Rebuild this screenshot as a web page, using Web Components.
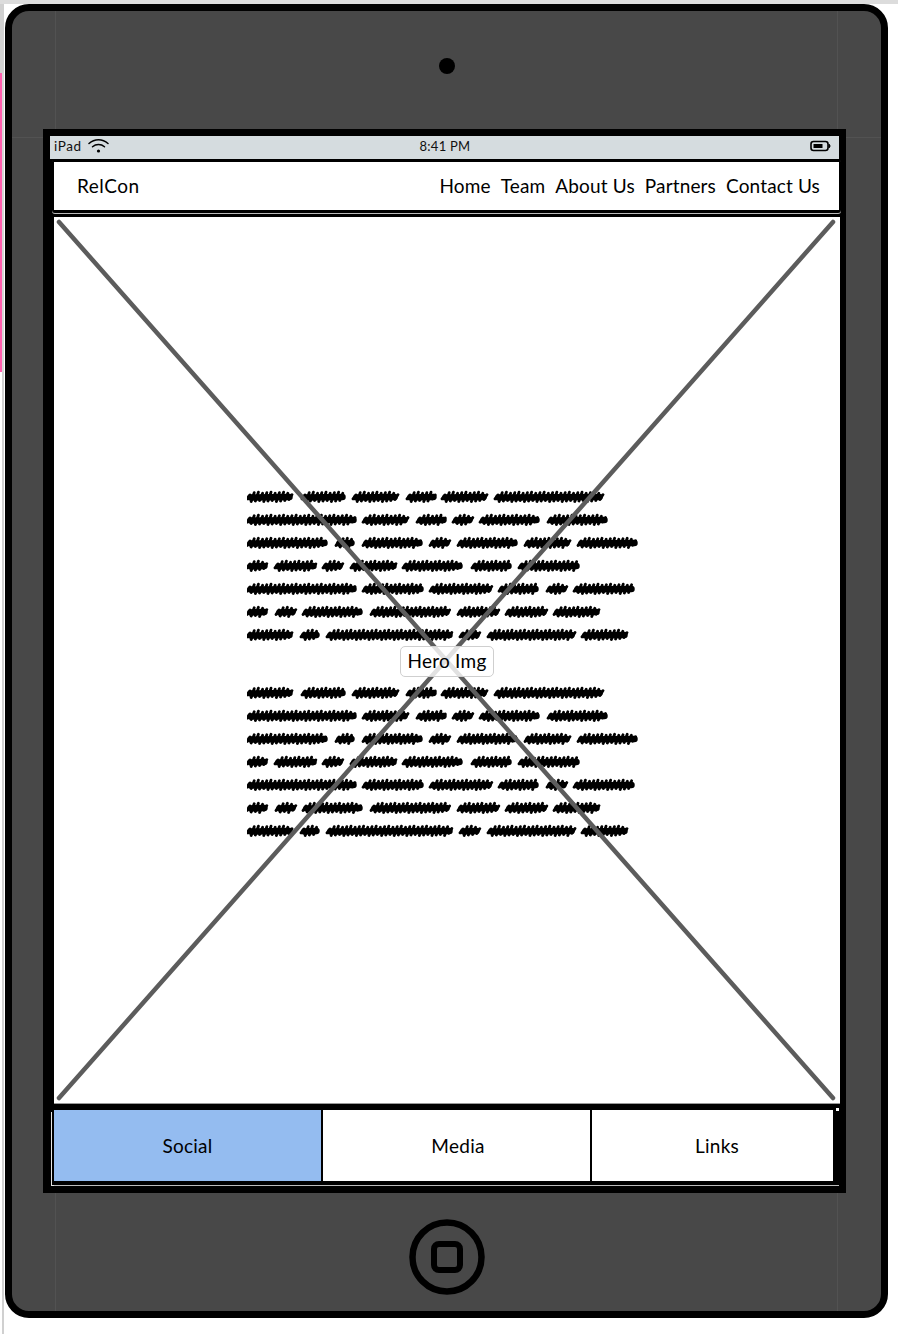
<!DOCTYPE html>
<html>
<head>
<meta charset="utf-8">
<title>RelCon wireframe</title>
<style>
    html, body { margin: 0; padding: 0; background: #fff; }
    body { font-family: "Lato", "Liberation Sans", sans-serif; color: #000; letter-spacing: 0.25px; }
</style>
</head>
<body>
<page-chrome>
    <tablet-frame>
        <status-bar carrier="iPad" time="8:41 PM"></status-bar>
        <nav-bar brand="RelCon">
            <nav-link>Home</nav-link>
            <nav-link>Team</nav-link>
            <nav-link>About Us</nav-link>
            <nav-link>Partners</nav-link>
            <nav-link>Contact Us</nav-link>
        </nav-bar>
        <hero-image label="Hero Img">
            <scribble-text></scribble-text>
            <scribble-text></scribble-text>
        </hero-image>
        <tab-bar>
            <tab-item active width="267">Social</tab-item>
            <tab-item width="267" shift="3">Media</tab-item>
            <tab-item width="241" shift="9">Links</tab-item>
        </tab-bar>
    </tablet-frame>
</page-chrome>

<script>
class PageChrome extends HTMLElement {
    connectedCallback() {
        this.attachShadow({ mode: 'open' });
        this.shadowRoot.innerHTML = `
            <style>
                :host {
                    display: grid;
                    grid-template-columns: 5px 883px 10px;
                    grid-template-rows: 4px 1314px 16px;
                    width: 898px;
                    height: 1334px;
                    overflow: hidden;
                    background: #fff;
                }
                .top { grid-column: 1 / 4; background: #dcdcdc; }
                .left { grid-row: 2 / 4; display: flex; flex-direction: column; width: 4px; }
                .left .a { height: 69px; background: #d0d0d0; }
                .left .b {
                    height: 299px;
                    background: linear-gradient(to right, #ff5fae 0 2px, #d6d6d6 2px);
                }
                .left .c {
                    flex: 1;
                    background: linear-gradient(to right, #fff 0 2px, #d0d0d0 2px);
                }
            </style>
            <div class="top"></div>
            <div class="left"><div class="a"></div><div class="b"></div><div class="c"></div></div>
            <slot></slot>
        `;
    }
}

class TabletFrame extends HTMLElement {
    connectedCallback() {
        this.attachShadow({ mode: 'open' });
        this.shadowRoot.innerHTML = `
            <style>
                :host {
                    display: flex;
                    flex-direction: column;
                    position: relative;
                    box-sizing: border-box;
                    width: 883px;
                    height: 1314px;
                    background: #484848;
                    border: 7px solid #000;
                    border-radius: 24px;
                }
                .camera-row { height: 118px; flex: none; padding-top: 47px; box-sizing: border-box; display: flex; justify-content: center; }
                .camera { width: 16px; height: 16px; border-radius: 50%; background: #000; }
                .screen {
                    flex: none;
                    box-sizing: border-box;
                    width: 803px;
                    height: 1064px;
                    margin-left: 31px;
                    padding-top: 7px;
                    background: #000;
                    display: flex;
                    flex-direction: column;
                    position: relative;
                }
                .home-row { flex: 1; display: flex; justify-content: center; padding-top: 26px; }
                .home { width: 76px; height: 76px; display: block; }
                /* faint guide lines left over on the bezel */
                .guide { position: absolute; background: rgba(255, 255, 255, 0.06); }
                .h1 { left: 0; width: 31px; top: 126px; height: 1px; }
                .h2 { right: 0; width: 35px; top: 126px; height: 1px; }
                .v1 { left: 825px; width: 1px; top: 0; height: 118px; }
                .v2 { left: 825px; width: 1px; top: 1182px; bottom: 0; }
                .v3 { left: 43px; width: 1px; top: 1182px; bottom: 0; }
                .v4 { left: 43px; width: 1px; top: 0; height: 118px; }
            </style>
            <div class="camera-row"><div class="camera"></div></div>
            <div class="screen"><slot></slot></div>
            <div class="home-row">
                <svg class="home" viewBox="0 0 76 76" fill="none" stroke="#000">
                    <circle cx="38" cy="38" r="34.5" stroke-width="6.5"/>
                    <rect x="25" y="25" width="26" height="26" rx="5" stroke-width="6"/>
                </svg>
            </div>
            <div class="guide h1"></div>
            <div class="guide h2"></div>
            <div class="guide v1"></div>
            <div class="guide v2"></div>
            <div class="guide v3"></div>
            <div class="guide v4"></div>
        `;
    }
}

class StatusBar extends HTMLElement {
    connectedCallback() {
        this.attachShadow({ mode: 'open' });
        const carrier = this.getAttribute('carrier') || '';
        const time = this.getAttribute('time') || '';
        this.shadowRoot.innerHTML = `
            <style>
                :host {
                    display: grid;
                    grid-template-columns: 1fr auto 1fr;
                    align-items: center;
                    flex: none;
                    box-sizing: border-box;
                    height: 23px;
                    width: 789px;
                    margin-left: 7px;
                    padding: 0 8px 3px 8px;
                    background: #d5dcdf;
                    font-size: 13.5px;
                    color: #111;
                }
                .left { display: flex; align-items: center; gap: 6px; margin-left: -4px; }
                .carrier { letter-spacing: 0.6px; }
                .time { font-size: 13px; margin-left: 1px; }
                .right { display: flex; justify-content: flex-end; }
                svg { display: block; }
            </style>
            <div class="left">
                <span class="carrier">${carrier}</span>
                <svg width="21" height="16" viewBox="0 0 21 16" fill="none" stroke="#000" stroke-width="1.5" stroke-linecap="round">
                    <path d="M1 5.5C6.5 .5 14.5 .5 20 5.5"/>
                    <path d="M4.5 8.8C8 5.8 13 5.8 16.5 8.8"/>
                    <circle cx="10.5" cy="13" r="1.6" fill="#000" stroke="none"/>
                </svg>
            </div>
            <span class="time">${time}</span>
            <div class="right">
                <svg width="21" height="12" viewBox="0 0 21 12" fill="none">
                    <rect x="1" y="1.5" width="17" height="9" rx="2.5" stroke="#000" stroke-width="1.6"/>
                    <rect x="3.5" y="4" width="9" height="4" fill="#000"/>
                    <path d="M19 4.2C20.3 5 20.3 7 19 7.8Z" fill="#000" stroke="#000"/>
                </svg>
            </div>
        `;
    }
}

class NavBar extends HTMLElement {
    connectedCallback() {
        this.attachShadow({ mode: 'open' });
        const brand = this.getAttribute('brand') || '';
        this.shadowRoot.innerHTML = `
            <style>
                :host {
                    display: flex;
                    justify-content: space-between;
                    align-items: center;
                    flex: none;
                    box-sizing: border-box;
                    width: 789px;
                    height: 54px;
                    margin-left: 9px;
                    padding: 0 19px 1px 23px;
                    background: #fff;
                    border-style: solid;
                    border-color: #000;
                    border-width: 3px 2px;
                    border-radius: 3px;
                    box-shadow: 0 1px 0 #bbb;
                    font-size: 19px;
                }
                .brand { letter-spacing: 0.5px; }
                .links { display: flex; gap: 10px; letter-spacing: 0.15px; }
            </style>
            <span class="brand">${brand}</span>
            <div class="links"><slot></slot></div>
        `;
    }
}

class NavLink extends HTMLElement {
    connectedCallback() {
        this.attachShadow({ mode: 'open' });
        this.shadowRoot.innerHTML = `
            <style>:host { display: block; white-space: nowrap; }</style>
            <slot></slot>
        `;
    }
}

class HeroImage extends HTMLElement {
    connectedCallback() {
        this.attachShadow({ mode: 'open' });
        const label = this.getAttribute('label') || '';
        this.shadowRoot.innerHTML = `
            <style>
                :host {
                    display: flex;
                    flex-direction: column;
                    gap: 44px;
                    flex: none;
                    position: relative;
                    box-sizing: border-box;
                    width: 790px;
                    height: 894px;
                    margin: 1px 0 0 9px;
                    padding: 273px 0 0 193px;
                    background: #fff;
                    border-style: solid;
                    border-color: #000;
                    border-width: 3px 2px 4px;
                    box-shadow: inset 0 -1px 0 #999;
                }
                .cross { position: absolute; left: 0; top: 0; }
                .label {
                    position: absolute;
                    left: 346px;
                    top: 429px;
                    box-sizing: border-box;
                    width: 94px;
                    height: 31px;
                    padding-bottom: 2px;
                    display: flex;
                    align-items: center;
                    justify-content: center;
                    background: rgba(255, 255, 255, 0.82);
                    border: 1px solid #cfcfcf;
                    border-radius: 5px;
                    font-size: 19px;
                    white-space: nowrap;
                }
            </style>
            <slot></slot>
            <svg class="cross" width="786" height="887" fill="none" stroke="#5c5c5c" stroke-width="4.5" stroke-linecap="round">
                <line x1="5" y1="5" x2="779" y2="881"/>
                <line x1="779" y1="5" x2="5" y2="881"/>
            </svg>
            <div class="label">${label}</div>
        `;
    }
}

// word extents of the blocked-out copy, x from the left of the block
const SCRIBBLE_LINES = [
    [[0, 46], [55, 99], [106, 151], [160, 190], [195, 240], [248, 356]],
    [[0, 110], [116, 161], [170, 200], [206, 226], [233, 293], [301, 361]],
    [[0, 81], [89, 108], [116, 176], [183, 203], [211, 271], [278, 323], [331, 391]],
    [[0, 21], [28, 70], [76, 96], [104, 150], [156, 216], [225, 265], [272, 333]],
    [[0, 110], [116, 177], [183, 245], [252, 292], [300, 320], [327, 388]],
    [[0, 21], [29, 49], [56, 116], [124, 203], [211, 252], [259, 300], [307, 353]],
    [[0, 46], [54, 73], [80, 206], [213, 233], [241, 328], [335, 381]]
];

class ScribbleText extends HTMLElement {
    connectedCallback() {
        this.attachShadow({ mode: 'open' });
        let core = '';
        let bumps = '';
        SCRIBBLE_LINES.forEach((words, row) => {
            const y = 7 + row * 23;
            words.forEach(([from, to]) => {
                core += `M${from + 3.5} ${y + 0.5}L${to - 3.5} ${y}`;
                // slanted pen strokes, shorter toward the ends of a word
                for (let x = from + 1, i = 0; x < to - 2; x += 4.2, i++) {
                    const edge = Math.min(x - from, to - x);
                    const taper = edge < 5 ? 0.55 : 1;
                    const up = (3.8 + ((i * 7 + row * 3) % 3) * 0.5) * taper;
                    const down = (3.5 + ((i * 5 + row) % 3) * 0.5) * taper;
                    bumps += `M${(x - 1).toFixed(1)} ${(y + down).toFixed(1)}L${(x + 2).toFixed(1)} ${(y - up).toFixed(1)}`;
                }
            });
        });
        this.shadowRoot.innerHTML = `
            <style>
                :host { display: block; width: 392px; height: 152px; }
                svg { display: block; }
            </style>
            <svg width="392" height="152" viewBox="0 0 392 152" fill="none" stroke="#000" stroke-linecap="round">
                <path d="${core}" stroke-width="6.5"/>
                <path d="${bumps}" stroke-width="2.8"/>
            </svg>
        `;
    }
}

class TabBar extends HTMLElement {
    connectedCallback() {
        this.attachShadow({ mode: 'open' });
        this.shadowRoot.innerHTML = `
            <style>
                :host {
                    display: flex;
                    flex: none;
                    position: relative;
                    box-sizing: border-box;
                    width: 783px;
                    height: 74px;
                    margin-left: 9px;
                    border: 2px solid #000;
                    border-bottom-width: 1px;
                    gap: 2px;
                    background: #000;
                    box-shadow: 0 3px 0 #000, -1px 4px 0 #e4e4e4;
                    font-size: 19px;
                }
                /* stray end of the sketch outline */
                :host::after {
                    content: '';
                    position: absolute;
                    left: 0;
                    right: -6px;
                    bottom: -5px;
                    height: 1px;
                    background: #bcbcbc;
                }
                :host::before {
                    content: '';
                    position: absolute;
                    right: -6px;
                    top: -2px;
                    width: 3px;
                    height: 3px;
                    background: #fff;
                }
            </style>
            <slot></slot>
        `;
    }
}

class TabItem extends HTMLElement {
    connectedCallback() {
        this.attachShadow({ mode: 'open' });
        const shift = this.getAttribute('shift') || 0;
        const width = this.getAttribute('width') || 100;
        this.shadowRoot.innerHTML = `
            <style>
                :host {
                    display: flex;
                    align-items: center;
                    justify-content: center;
                    flex: none;
                    box-sizing: border-box;
                    width: ${width}px;
                    padding-left: ${shift}px;
                    background: #fff;
                }
                :host([active]) { background: #94bcf0; }
            </style>
            <slot></slot>
        `;
    }
}

customElements.define('page-chrome', PageChrome);
customElements.define('tablet-frame', TabletFrame);
customElements.define('status-bar', StatusBar);
customElements.define('nav-bar', NavBar);
customElements.define('nav-link', NavLink);
customElements.define('hero-image', HeroImage);
customElements.define('scribble-text', ScribbleText);
customElements.define('tab-bar', TabBar);
customElements.define('tab-item', TabItem);
</script>
</body>
</html>
